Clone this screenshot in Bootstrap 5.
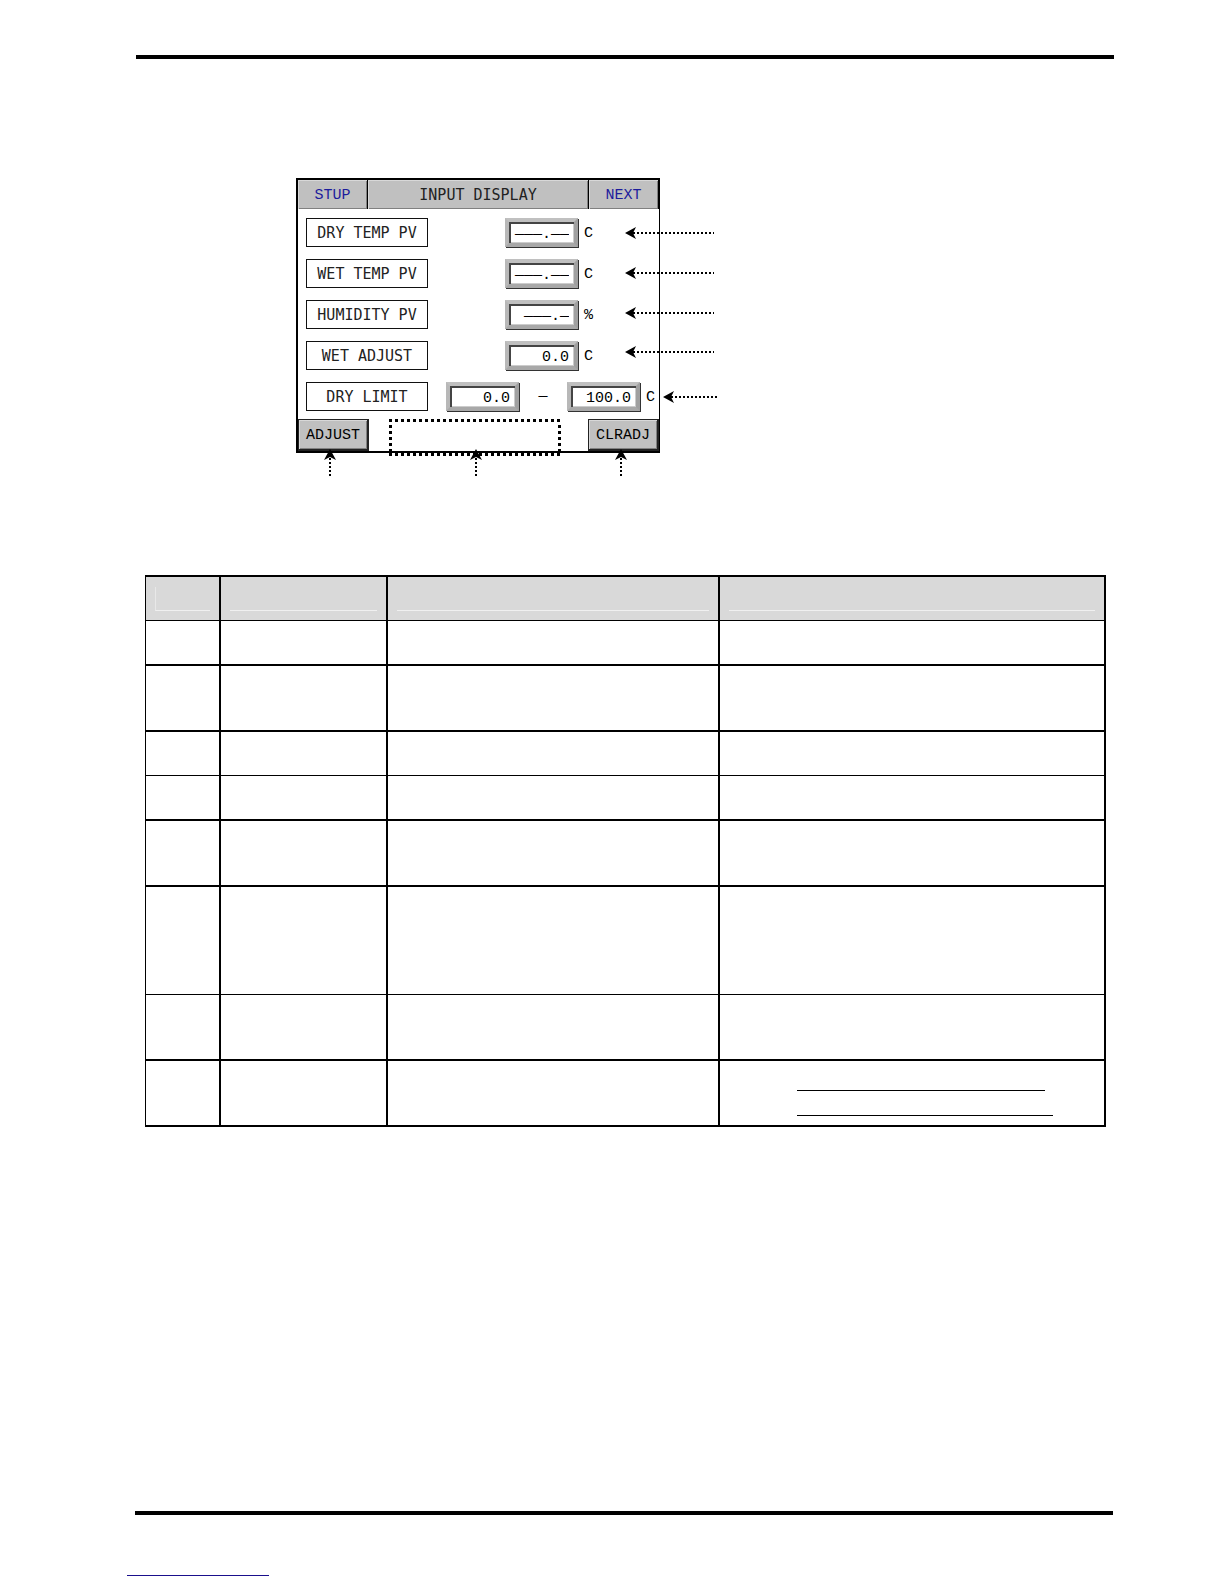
<!DOCTYPE html>
<html lang="en">
<head>
<meta charset="utf-8">
<meta name="viewport" content="width=device-width, initial-scale=1">
<title>Input Display</title>
<link rel="stylesheet" href="https://cdn.jsdelivr.net/npm/bootstrap@5.3.0/dist/css/bootstrap.min.css">
<style>
  body { background: #fff; color: #000; font-family: "Liberation Mono", monospace; font-size: 15px; line-height: 20px; }
  .rule-top { height: 4px; background: #000; margin: 55px 110px 0 136px; }
  .rule-bottom { height: 4px; background: #000; margin: 0 111px 0 135px; }
  .foot-line { width: 142px; height: 1px; background: #1a0f8c; margin: 60px 0 8px 127px; }
  .figure-area { margin: 119px 0 122px 296px; width: 364px; }

  .panel { border: 2px solid #000; border-right-width: 1px; height: 275px; }
  .panel-head { height: 30px; gap: 1px; background: #000; padding-right: 1px; margin-bottom: 9px; }
  .key { border: 0; border-radius: 0; background: #c0c0c0; color: #222; padding: 2px 0 0; width: 69px;
         box-shadow: inset 1px 1px 0 #d8d8d8, inset -1px -1px 0 #808080; }
  .key-nav { color: #1c1c9c; }
  .key-foot { width: 71px; height: 32px; border: 1px solid #222; border-width: 1px 2px 2px 1px; color: #000; }
  .title { background: #c0c0c0; box-shadow: inset 1px 1px 0 #d8d8d8, inset -1px -1px 0 #808080; }
  .tall { font-family: "DejaVu Sans Mono", monospace; color: #222; }

  .line { height: 29px; margin-bottom: 12px; padding-left: 8px; }
  .name { width: 122px; height: 29px; border: 1px solid #111; }
  .val { width: 73px; height: 29px; border: 4px solid #b8b8b8; border-color: #c0c0c0 #a0a0a0 #a8a8a8 #b8b8b8; border-radius: 0;
         background: #fff; color: #000; padding: 3px 5px 0 0; text-align: right; outline: 0;
         box-shadow: 1px 1px 0 #333, inset 2px 2px 0 #444, inset -1px -1px 0 #ccc; }
  .unit { width: 81px; padding: 2px 0 0 6px; }
  .unit-edge { width: 19px; }
  .dash { width: 48px; }
  .panel-foot { margin-top: -4px; }
  .callouts { left: 0; top: 0; pointer-events: none; }

  .spec-wrap { margin: 0 118px 0 145px; }
  .spec { width: 100%; table-layout: fixed; border-collapse: separate; border-spacing: 0; border-top: 2px solid #000; border-left: 1px solid #000; }
  .spec th, .spec td { padding: 0; border: solid #000; border-width: 0 2px 2px 0; vertical-align: top; }
  .spec .thin > * { border-bottom-width: 1px; }
  .spec th { background: #d9d9d9; padding: 10px 9px 9px; }
  .spec th div { height: 24px; border-bottom: 1px solid #f0f0f0; }
  .spec th:first-child div { border-left: 1px solid #e8e8e8; }
  .c1 { width: 75px; } .c2 { width: 167px; } .c3 { width: 332px; }
  .h44 { height: 44px; } .h45 { height: 45px; } .h66 { height: 66px; } .h108 { height: 108px; }
  .blank { border-bottom: 1px solid #000; margin-left: 77px; }
  .blank-a { width: 248px; height: 30px; }
  .blank-b { width: 256px; height: 25px; }
</style>
</head>
<body>
<div class="d-flex flex-column min-vh-100">
  <header><div class="rule-top"></div></header>
  <main>
    <div class="figure-area position-relative">
      <form class="panel d-flex flex-column">
        <div class="panel-head d-flex">
          <button type="button" class="key key-nav">STUP</button>
          <div class="title tall flex-grow-1 d-flex align-items-center justify-content-center">INPUT DISPLAY</div>
          <button type="button" class="key key-nav">NEXT</button>
        </div>
        <div class="line d-flex align-items-center">
          <label for="dry" class="name tall d-flex align-items-center justify-content-center">DRY TEMP PV</label>
          <input id="dry" class="val ms-auto" value="———.——" readonly><span class="unit">C</span>
        </div>
        <div class="line d-flex align-items-center">
          <label for="wet" class="name tall d-flex align-items-center justify-content-center">WET TEMP PV</label>
          <input id="wet" class="val ms-auto" value="———.——" readonly><span class="unit">C</span>
        </div>
        <div class="line d-flex align-items-center">
          <label for="hum" class="name tall d-flex align-items-center justify-content-center">HUMIDITY PV</label>
          <input id="hum" class="val ms-auto" value="———.—" readonly><span class="unit">%</span>
        </div>
        <div class="line d-flex align-items-center">
          <label for="adj" class="name tall d-flex align-items-center justify-content-center">WET ADJUST</label>
          <input id="adj" class="val ms-auto" value="0.0"><span class="unit">C</span>
        </div>
        <div class="line d-flex align-items-center">
          <label for="low" class="name tall d-flex align-items-center justify-content-center">DRY LIMIT</label>
          <input id="low" class="val ms-auto" value="0.0"><span class="dash text-center">—</span><input id="high" class="val" value="100.0" aria-label="DRY LIMIT high"><span class="unit unit-edge">C</span>
        </div>
        <div class="panel-foot d-flex justify-content-between">
          <button type="button" class="key key-foot">ADJUST</button>
          <button type="button" class="key key-foot">CLRADJ</button>
        </div>
      </form>
      <!-- callout arrows and message frame drawn over the panel -->
      <svg class="callouts position-absolute" width="430" height="310" viewBox="0 0 430 310" aria-hidden="true">
        <defs>
          <path id="head" d="M0 0L11 -6L8 0L11 6Z"/>
        </defs>
        <g fill="none" stroke="#000" stroke-width="3" stroke-dasharray="3 3">
          <path d="M93 242.500H264"/><path d="M93 276.500H264"/>
          <path d="M94.500 247V277"/><path d="M263.500 247V277"/>
        </g>
        <g fill="none" stroke="#000" stroke-width="2" stroke-dasharray="2 2">
          <path d="M337 55H418"/><path d="M337 95H418"/><path d="M337 135H418"/><path d="M337 174H418"/><path d="M375 219H421"/>
          <path d="M34 280V299"/><path d="M180 280V299"/><path d="M325 280V299"/>
        </g>
        <use href="#head" x="329" y="55"/><use href="#head" x="329" y="95"/><use href="#head" x="329" y="135"/><use href="#head" x="329" y="174"/><use href="#head" x="367" y="219"/>
        <use href="#head" transform="translate(34 271) rotate(90)"/><use href="#head" transform="translate(180 271) rotate(90)"/><use href="#head" transform="translate(325 271) rotate(90)"/>
      </svg>
    </div>
    <div class="spec-wrap">
      <table class="spec">
        <colgroup><col class="c1"><col class="c2"><col class="c3"><col></colgroup>
        <thead><tr class="h44 thin"><th><div></div></th><th><div></div></th><th><div></div></th><th><div></div></th></tr></thead>
        <tbody>
          <tr class="h45"><td></td><td></td><td></td><td></td></tr>
          <tr class="h66"><td></td><td></td><td></td><td></td></tr>
          <tr class="h44 thin"><td></td><td></td><td></td><td></td></tr>
          <tr class="h45"><td></td><td></td><td></td><td></td></tr>
          <tr class="h66"><td></td><td></td><td></td><td></td></tr>
          <tr class="h108 thin"><td></td><td></td><td></td><td></td></tr>
          <tr class="h66"><td></td><td></td><td></td><td></td></tr>
          <tr class="h66"><td></td><td></td><td></td><td><div class="blank blank-a"></div><div class="blank blank-b"></div></td></tr>
        </tbody>
      </table>
    </div>
  </main>
  <footer class="mt-auto"><div class="rule-bottom"></div><div class="foot-line"></div></footer>
</div>
<script src="https://cdn.jsdelivr.net/npm/bootstrap@5.3.0/dist/js/bootstrap.bundle.min.js"></script>
</body>
</html>
